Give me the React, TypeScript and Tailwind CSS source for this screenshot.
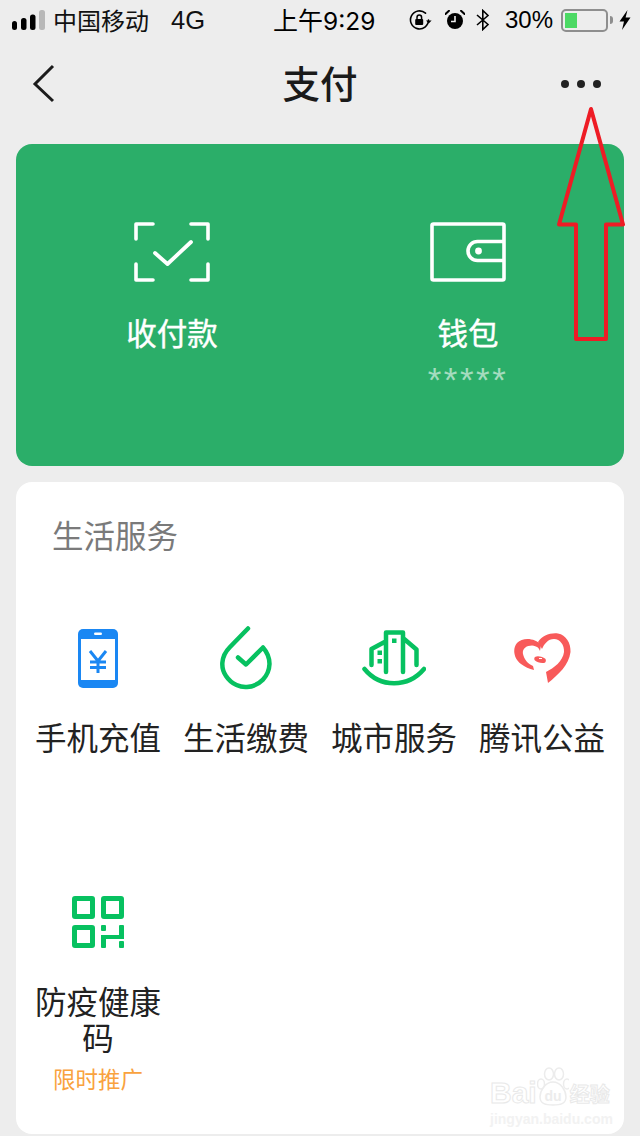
const cjk = "font-['Noto_Sans_CJK_SC','Noto_Sans',sans-serif]";

function Signal() {
  return (
    <svg width="33" height="20" viewBox="0 0 33 20" className="block">
      <rect x="0" y="11" width="5" height="9" rx="2.5" fill="#000" />
      <rect x="9" y="8" width="5.5" height="12" rx="2.5" fill="#000" />
      <rect x="18" y="4.5" width="5.5" height="15.5" rx="2.5" fill="#000" />
      <rect x="27" y="0" width="6" height="20" rx="2.5" fill="#b8b8b8" />
    </svg>
  );
}

function RotationLock() {
  return (
    <svg width="23" height="20" viewBox="0 0 23 20" className="block">
      <path d="M19.5 10a9 9 0 1 1-3-6.8" fill="none" stroke="#000" strokeWidth="1.6" strokeLinecap="round" />
      <path d="M17 10.5h5.6l-2.8 3z" fill="#000" />
      <rect x="6.2" y="9" width="8" height="6" rx="1" fill="#000" />
      <path d="M8 9V7.4a2.3 2.3 0 0 1 4.6 0V9" fill="none" stroke="#000" strokeWidth="1.5" />
    </svg>
  );
}

function Alarm() {
  return (
    <svg width="20" height="20" viewBox="0 0 20 20" className="block">
      <circle cx="10" cy="11" r="8" fill="#000" />
      <path d="M10 6v5.5H6" fill="none" stroke="#ededed" strokeWidth="1.6" />
      <path d="M0.5 4 L4 0.8 M19.5 4 L16 0.8" stroke="#000" strokeWidth="2" strokeLinecap="round" />
    </svg>
  );
}

function Bluetooth() {
  return (
    <svg width="14" height="22" viewBox="0 0 14 22" className="block">
      <path d="M1 6l11 9.5L6.8 20.5V1.5L12 6.5 1 16" fill="none" stroke="#000" strokeWidth="1.6" />
    </svg>
  );
}

function Battery() {
  return (
    <div className="flex items-center">
      <div className="h-[23px] w-[47px] rounded-[5px] border-2 border-[#8e8e8e] p-[2px]">
        <div className="h-full w-[12px] bg-[#4cd964]" />
      </div>
      <div className="ml-[2px] h-[8px] w-[3px] rounded-r-[3px] bg-[#8e8e8e]" />
    </div>
  );
}

function Bolt() {
  return (
    <svg width="12" height="20" viewBox="0 0 12 20" className="block">
      <path d="M8.5 0 L0.5 11.5 H5 L3 20 L11.5 7.5 H6.6 Z" fill="#000" />
    </svg>
  );
}

function StatusBar() {
  return (
    <div className="grid h-[40px] grid-cols-[261px_1fr] items-center pl-[12px] pr-[10px] text-nowrap">
      <div className="flex items-center text-[24px] leading-[40px] text-[#111]">
        <Signal />
        <span className={`ml-[8px] ${cjk}`}>中国移动</span>
        <span className="ml-[22px] font-['Liberation_Sans',sans-serif] text-[25.5px]">4G</span>
      </div>
      <div className="flex items-center text-black">
        <span className={`w-[136px] whitespace-nowrap text-[25px] ${cjk}`}>上午<span className="font-['Inter',sans-serif] text-[24.500px]">9:29</span></span>
        <RotationLock />
        <span className="ml-[13px]"><Alarm /></span>
        <span className="ml-[11px]"><Bluetooth /></span>
        <span className="ml-[15px] font-['Liberation_Sans',sans-serif] text-[24px] leading-none">30%</span>
        <span className="ml-[8px]"><Battery /></span>
        <span className="ml-[6px]"><Bolt /></span>
      </div>
    </div>
  );
}

function NavBar() {
  return (
    <div className="grid h-[88px] grid-cols-[1fr_auto_1fr] items-center pl-[32px] pr-[39px]">
      <svg width="24" height="40" viewBox="0 0 24 40" className="block">
        <path d="M21 2 L3 20 L21 37" fill="none" stroke="#1c1c1c" strokeWidth="3" />
      </svg>
      <span className={`translate-x-[3.500px] -translate-y-[2px] text-[37.500px] font-medium leading-none text-[#1a1a1a] ${cjk}`}>支付</span>
      <div className="flex justify-end gap-[8px]">
        <span className="h-[8px] w-[8px] shrink-0 rounded-full bg-[#222]" />
        <span className="h-[8px] w-[8px] shrink-0 rounded-full bg-[#222]" />
        <span className="h-[8px] w-[8px] shrink-0 rounded-full bg-[#222]" />
      </div>
    </div>
  );
}

function ScanIcon() {
  return (
    <svg width="76" height="60" viewBox="0 0 76 60" className="block">
      <g fill="none" stroke="#fff" strokeWidth="3.6" strokeLinejoin="round" strokeLinecap="round">
        <path d="M2 17V2H19M57 2H74V17M2 42V58H19M57 58H74V42" />
        <path d="M21 31 L33.5 42 L57 20" strokeWidth="3.8" />
      </g>
    </svg>
  );
}

function WalletIcon() {
  return (
    <svg width="76" height="60" viewBox="0 0 76 60" className="block">
      <g fill="none" stroke="#fff" strokeWidth="3.6" strokeLinejoin="round">
        <rect x="2" y="2" width="72" height="56" rx="1.5" />
        <path d="M74 19.5H47.500a9.500 9.500 0 0 0 0 19H74" />
      </g>
      <circle cx="48.500" cy="29" r="3.400" fill="#fff" />
    </svg>
  );
}

function PhoneIcon() {
  return (
    <svg width="42" height="60" viewBox="0 0 42 60" className="block">
      <rect x="1" y="1" width="40" height="59" rx="5" fill="#1a87f3" />
      <rect x="4" y="11" width="34" height="41" fill="#fff" />
      <rect x="17" y="4.5" width="8" height="2.4" rx="1.2" fill="#fff" />
      <path d="M13 23 L21 33 L29 23 M13 34H29M13 39.5H29M21 33V45" fill="none" stroke="#1a87f3" strokeWidth="3" />
    </svg>
  );
}

function DropIcon() {
  return (
    <svg width="52" height="64" viewBox="0 0 52 64" className="block">
      <g fill="none" stroke="#07c160" strokeWidth="4.5" strokeLinecap="round" strokeLinejoin="round">
        <path d="M28 2.5 L10 21 C0 31 1 43 6 50 C12 59 21 61.5 27 61 C40 60 49 50 49.500 38 C49.500 31 47 26 43 21.500 L26 38.500 L18 31.500" />
      </g>
    </svg>
  );
}

function CityIcon() {
  return (
    <svg width="64" height="58" viewBox="0 0 64 58" className="block">
      <g fill="none" stroke="#07c160" strokeWidth="4.500" strokeLinecap="round" strokeLinejoin="round">
        <path d="M2.500 40 C18 59 46 59 62 40" />
        <path d="M9.500 36V20L23.500 12.500M24 43V3.500H41V43M41 9L54.500 20.500V36" />
      </g>
      <rect x="30" y="9.500" width="4.500" height="4.500" fill="#07c160" />
      <rect x="15.500" y="21.500" width="4.500" height="4.500" fill="#07c160" />
      <rect x="15.500" y="30" width="4.500" height="4.500" fill="#07c160" />
    </svg>
  );
}

function HeartIcon() {
  return (
    <svg width="58" height="52" viewBox="0 0 58 52" className="block">
      <path
        fill="#f85a5a"
        d="M28 13 C22 6 10 5 4 11 C-1 17 1 27 8 32 C12 35 16 37 21 38 L20 34 C15 32 11 27 10 22 C9 17 13 13.500 19 13.500 C24 14 26 16 27 19 Z"
      />
      <path
        fill="#f85a5a"
        d="M25 10 C29 4 37 0.500 45 1.500 C53 3 58 11 57.500 20 C56 33 45 43 35 51 L33 40 C41 36 50 29 51 20 C51.500 13 47 7 41 7 C35 7 31 12 29 17 Z"
      />
      <path fill="#f85a5a" d="M22 25 C24 23.500 28 24 32 26.500 C33.500 27.500 33 31 31 31 C27 31.500 24 30 22 28.500 C21 27.500 21 26 22 25 Z" />
      <path d="M26 26.500h3" stroke="#fff" strokeWidth="1" />
    </svg>
  );
}

function QrIcon() {
  return (
    <svg width="52" height="52" viewBox="0 0 52 52" className="block">
      <g fill="none" stroke="#07c160" strokeWidth="5" strokeLinejoin="round">
        <rect x="2.500" y="2.500" width="18" height="18" rx="0.500" />
        <rect x="31.500" y="2.500" width="18" height="18" rx="0.500" />
        <rect x="2.500" y="31.500" width="18" height="18" rx="0.500" />
      </g>
      <g fill="#07c160">
        <rect x="29" y="29" width="5" height="6" rx="1" />
        <rect x="29" y="39" width="5" height="13" rx="1" />
        <rect x="29" y="39" width="23" height="4" />
        <rect x="47" y="29" width="5" height="14" rx="1" />
        <rect x="47" y="45" width="5" height="7" rx="1" />
      </g>
    </svg>
  );
}

function Service({ icon, label, note }: { icon: React.ReactNode; label: string; note?: string }) {
  return (
    <div className="flex flex-col items-center px-[8px] text-center">
      <div className="flex h-[60px] items-center justify-center">{icon}</div>
      <div className={`mt-[30px] text-[31.500px] leading-[36px] text-[#222] ${cjk}`}>{label}</div>
      {note && <div className={`mt-[9px] text-[22.500px] leading-[30px] text-[#f9a23e] ${cjk}`}>{note}</div>}
    </div>
  );
}

function Watermark() {
  const outline = "text-transparent [-webkit-text-stroke:1px_#e9e9e9]";
  return (
    <div className="pointer-events-none absolute left-[490px] top-[1064px] w-[120px]">
      <div className="flex h-[46px] items-end">
        <span className={`font-['Liberation_Sans',sans-serif] text-[30px] font-bold leading-[34px] ${outline}`}>Bai</span>
        <svg width="32" height="46" viewBox="0 0 32 46" className="block shrink-0">
          <g fill="none" stroke="#ececec" strokeWidth="1.500">
            <ellipse cx="12" cy="10" rx="4.500" ry="6" />
            <ellipse cx="22" cy="10" rx="4.500" ry="6" />
            <ellipse cx="4" cy="20" rx="3.500" ry="5" />
            <ellipse cx="30" cy="20" rx="3.500" ry="5" />
            <path d="M16 18 C8 18 3 27 3 33 C3 40 9 41 16 41 C23 41 29 40 29 33 C29 27 24 18 16 18 Z" />
          </g>
          <text x="16" y="37" textAnchor="middle" fontSize="14" fontWeight="700" fontFamily="Liberation Sans" fill="#ececec">du</text>
        </svg>
        <span className={`ml-[1px] whitespace-nowrap text-[20px] font-bold leading-[32px] ${outline} ${cjk}`}>经验</span>
      </div>
      <div className="mt-[1px] whitespace-nowrap font-['Liberation_Sans',sans-serif] text-[14px] font-bold leading-[16px] text-[#f2f2f2]">jingyan.baidu.com</div>
    </div>
  );
}

function RedArrow() {
  return (
    <svg width="72" height="240" viewBox="0 0 72 240" className="pointer-events-none absolute left-[555px] top-[104px] block">
      <path d="M36 5 L68 120.500 L51 120.500 L51 235 L21 235 L21 120.500 L4 120.500 Z" fill="none" stroke="#ee1c25" strokeWidth="4" strokeLinejoin="round" />
    </svg>
  );
}

export default function App() {
  const heading = `mt-[28px] text-[30.500px] leading-[44px] text-white [-webkit-text-stroke:0.4px_#fff] ${cjk}`;
  return (
    <div className="relative h-[1136px] w-[640px] overflow-hidden bg-[#ededed]">
      <StatusBar />
      <NavBar />
      <div className="mx-[16px] mt-[16px] grid h-[322px] grid-cols-2 rounded-[16px] bg-[#2bae69] px-[8px] pt-[78px]">
        <div className="flex flex-col items-center">
          <ScanIcon />
          <div className={heading}>收付款</div>
        </div>
        <div className="flex flex-col items-center">
          <WalletIcon />
          <div className={heading}>钱包</div>
          <div className="mt-[8px] font-['Liberation_Sans',sans-serif] text-[35px] leading-[36px] tracking-[2.500px] text-[#a4dcbf]">*****</div>
        </div>
      </div>
      <div className="mx-[16px] mt-[16px] h-[652px] rounded-[16px] bg-white px-[8px] pt-[30px]">
        <div className={`pl-[28px] text-[31.500px] leading-[44px] text-[#7a7a7a] ${cjk}`}>生活服务</div>
        <div className="mt-[72px] grid grid-cols-4 auto-rows-[264px]">
          <Service icon={<PhoneIcon />} label="手机充值" />
          <Service icon={<DropIcon />} label="生活缴费" />
          <Service icon={<CityIcon />} label="城市服务" />
          <Service icon={<HeartIcon />} label="腾讯公益" />
          <Service icon={<QrIcon />} label="防疫健康码" note="限时推广" />
        </div>
      </div>
      <RedArrow />
      <Watermark />
    </div>
  );
}
